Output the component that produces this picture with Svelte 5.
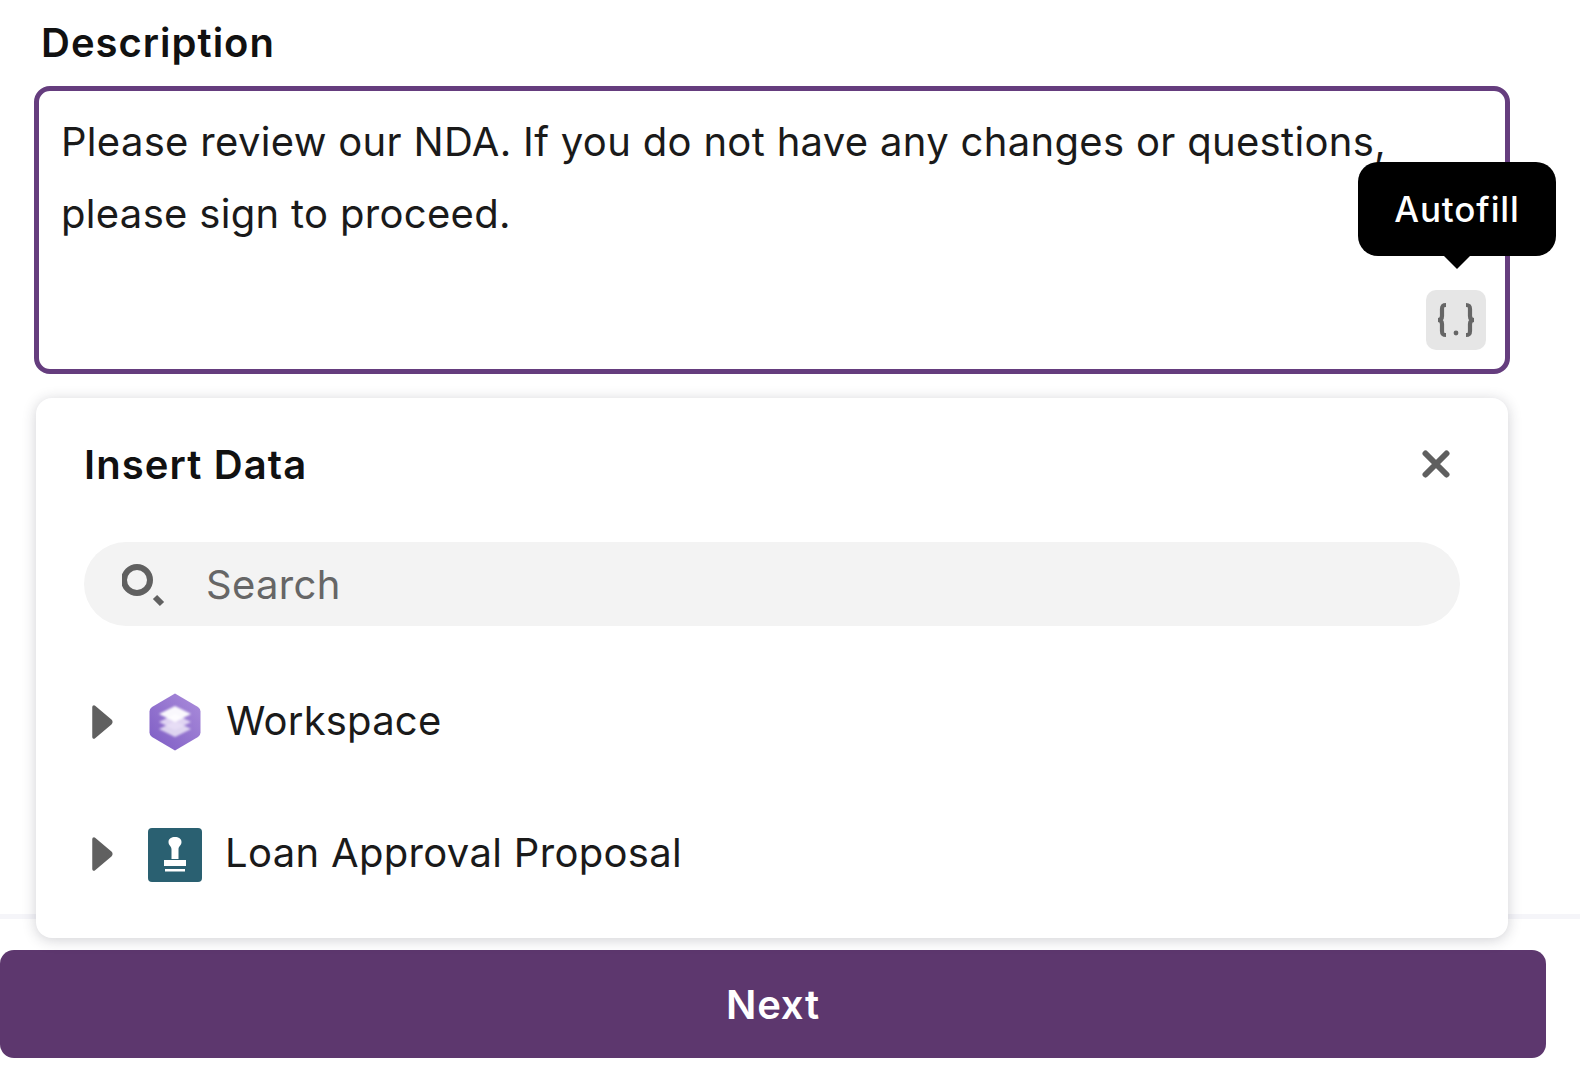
<script lang="ts">
  let description = 'Please review our NDA. If you do not have any changes or questions, please sign to proceed.'
  const sources = [
    { name: 'Workspace', icon: 'workspace' },
    { name: 'Loan Approval Proposal', icon: 'stamp' },
  ]
</script>

<div class="page">
  <div class="form">
    <div class="label">Description</div>
    <div class="field">
      <div class="input">
        <p class="value">{description}</p>
        <button class="vars" aria-label="Insert data">
          <svg width="44" height="40" viewBox="0 0 44 40" fill="none" stroke="#666" stroke-width="4.2">
            <path d="M12 5c-3 0-4 1-4 4v7c0 2-1 4-4 4 3 0 4 2 4 4v7c0 3 1 4 4 4" />
            <path d="M32 5c3 0 4 1 4 4v7c0 2 1 4 4 4-3 0-4 2-4 4v7c0 3-1 4-4 4" />
            <circle cx="22" cy="33" r="2.400" fill="#666" stroke="none" />
          </svg>
        </button>
      </div>
      <div class="tooltip">Autofill</div>

      <div class="popover">
        <div class="head">
          <span class="title">Insert Data</span>
          <svg class="close" width="28" height="28" viewBox="0 0 28 28" stroke="#5f5f5f" stroke-width="6" stroke-linecap="round">
            <path d="M3.500 3.500l21 21M24.500 3.500l-21 21" />
          </svg>
        </div>
        <div class="search">
          <svg width="44" height="52" viewBox="0 0 44 52" fill="none" stroke="#606060">
            <circle cx="15" cy="22" r="13" stroke-width="6" />
            <path d="M33 39l7 7" stroke-width="6" />
          </svg>
          <span>Search</span>
        </div>
        <ul>
          {#each sources as s}
            <li>
              <svg class="caret" width="22" height="36" viewBox="0 0 22 36">
                <path d="M3 3 19 16.500q1.500 1.500 0 3L3 33z" fill="#606060" stroke="#606060" stroke-width="3.500" stroke-linejoin="round" />
              </svg>
              {#if s.icon === 'workspace'}
                <svg class="icon" width="54" height="60" viewBox="0 0 54 60">
                  <defs>
                    <linearGradient id="hex" x1="0" y1="1" x2="1" y2="0">
                      <stop offset="0" stop-color="#7d5cc4" />
                      <stop offset="1" stop-color="#ab8ddb" />
                    </linearGradient>
                    <filter id="soft" x="-10%" y="-10%" width="120%" height="120%">
                      <feGaussianBlur stdDeviation="0.900" />
                    </filter>
                  </defs>
                  <path d="M27 1.500 50 15q2.500 1.500 2.500 4.500V40.500q0 3-2.500 4.500L27 58.500 4 45Q1.500 43.500 1.500 40.500V19.500q0-3 2.500-4.500z" fill="url(#hex)" />
                  <g filter="url(#soft)">
                    <path d="M27 29 43 37 27 45 11 37z" fill="#fff" opacity=".7" />
                    <path d="M27 22 43 30 27 38 11 30z" fill="#e8def6" opacity=".9" />
                    <path d="M27 14 43 22 27 30 11 22z" fill="#fff" opacity=".95" />
                  </g>
                </svg>
              {:else}
                <svg class="icon stamp" width="54" height="54" viewBox="0 0 54 54">
                  <rect width="54" height="54" rx="4" fill="#2a6071" />
                  <path d="M20.500 14c0-3.500 3-5 6.500-5s6.500 1.500 6.500 5c0 3.500-3 4-3 7.500V31h-7v-9.500c0-3.500-3-4-3-7.500z" fill="#fff" />
                  <rect x="16" y="32" width="22" height="6" fill="#fff" />
                  <rect x="17" y="41" width="20" height="2.500" fill="#fff" />
                </svg>
              {/if}
              <span>{s.name}</span>
            </li>
          {/each}
        </ul>
      </div>
    </div>
  </div>
  <div class="footer">
    <button class="next">Next</button>
  </div>
</div>

<style>
  :global(body) {
    margin: 0;
    background: #fff;
  }

  .page {
    width: 1580px;
    height: 1084px;
    overflow: hidden;
    font-family: Inter, 'Liberation Sans', sans-serif;
    color: #111;
  }

  .form {
    height: 914px;
    box-sizing: border-box;
    padding: 20px 70px 0 34px;
  }

  .label {
    font-size: 40px;
    letter-spacing: 1px;
    line-height: 46px;
    font-weight: 600;
    padding-left: 7px;
    margin-bottom: 20px;
  }

  .field {
    position: relative;
  }

  .input {
    height: 288px;
    box-sizing: border-box;
    border: 5px solid #653d7e;
    border-radius: 16px;
    padding: 15px 60px 12px 22px;
    position: relative;
  }

  .value {
    margin: 0;
    font-size: 40px;
    letter-spacing: 0.32px;
    line-height: 72px;
    color: #1a1a1a;
  }

  .vars {
    position: absolute;
    right: 19px;
    bottom: 19px;
    width: 60px;
    height: 60px;
    padding: 0;
    border: none;
    border-radius: 10px;
    background: #e6e6e6;
    display: flex;
    align-items: center;
    justify-content: center;
  }

  .tooltip {
    position: absolute;
    top: 76px;
    right: -46px;
    width: 198px;
    height: 94px;
    border-radius: 20px;
    background: #000;
    color: #fff;
    font-size: 35px;
    letter-spacing: 0.9px;
    font-weight: 500;
    display: flex;
    align-items: center;
    justify-content: center;
  }

  .tooltip::after {
    content: '';
    position: absolute;
    left: 50%;
    bottom: -13px;
    margin-left: -14px;
    border-left: 14px solid transparent;
    border-right: 14px solid transparent;
    border-top: 14px solid #000;
  }

  .popover {
    position: absolute;
    top: 312px;
    left: 2px;
    right: 2px;
    height: 540px;
    box-sizing: border-box;
    padding: 0 48px;
    background: #fff;
    border-radius: 16px;
    box-shadow: 0 2px 14px rgba(40, 40, 60, 0.22);
    z-index: 1;
  }

  .head {
    height: 144px;
    box-sizing: border-box;
    padding-bottom: 12px;
    display: flex;
    align-items: center;
    justify-content: space-between;
  }

  .title {
    font-size: 40px;
    letter-spacing: 1.1px;
    font-weight: 600;
  }

  .close {
    margin-right: 10px;
  }

  .search {
    height: 84px;
    border-radius: 42px;
    background: #f3f3f3;
    display: flex;
    align-items: center;
    gap: 40px;
    padding-left: 38px;
    font-size: 40px;
    letter-spacing: 0.33px;
    color: #666;
  }

  ul {
    list-style: none;
    margin: 0;
    padding: 0;
    padding-top: 30px;
  }

  li {
    height: 132px;
    display: flex;
    align-items: center;
    font-size: 40px;
    letter-spacing: 0.2px;
    color: #1a1a1a;
  }

  li:last-child {
    letter-spacing: 0.33px;
  }

  li span {
    padding-bottom: 4px;
  }

  .caret {
    margin-left: 7px;
    margin-right: 35px;
  }

  .icon {
    margin-right: 24px;
  }

  .stamp {
    margin-top: 2px;
    margin-right: 23px;
  }

  .footer {
    border-top: 5px solid #f5f5f9;
    padding-top: 31px;
  }

  .next {
    display: block;
    width: 1546px;
    height: 108px;
    border: none;
    border-radius: 14px;
    background: #5d376e;
    color: #fff;
    font-family: inherit;
    font-size: 40px;
    letter-spacing: 0.8px;
    font-weight: 600;
  }
</style>
